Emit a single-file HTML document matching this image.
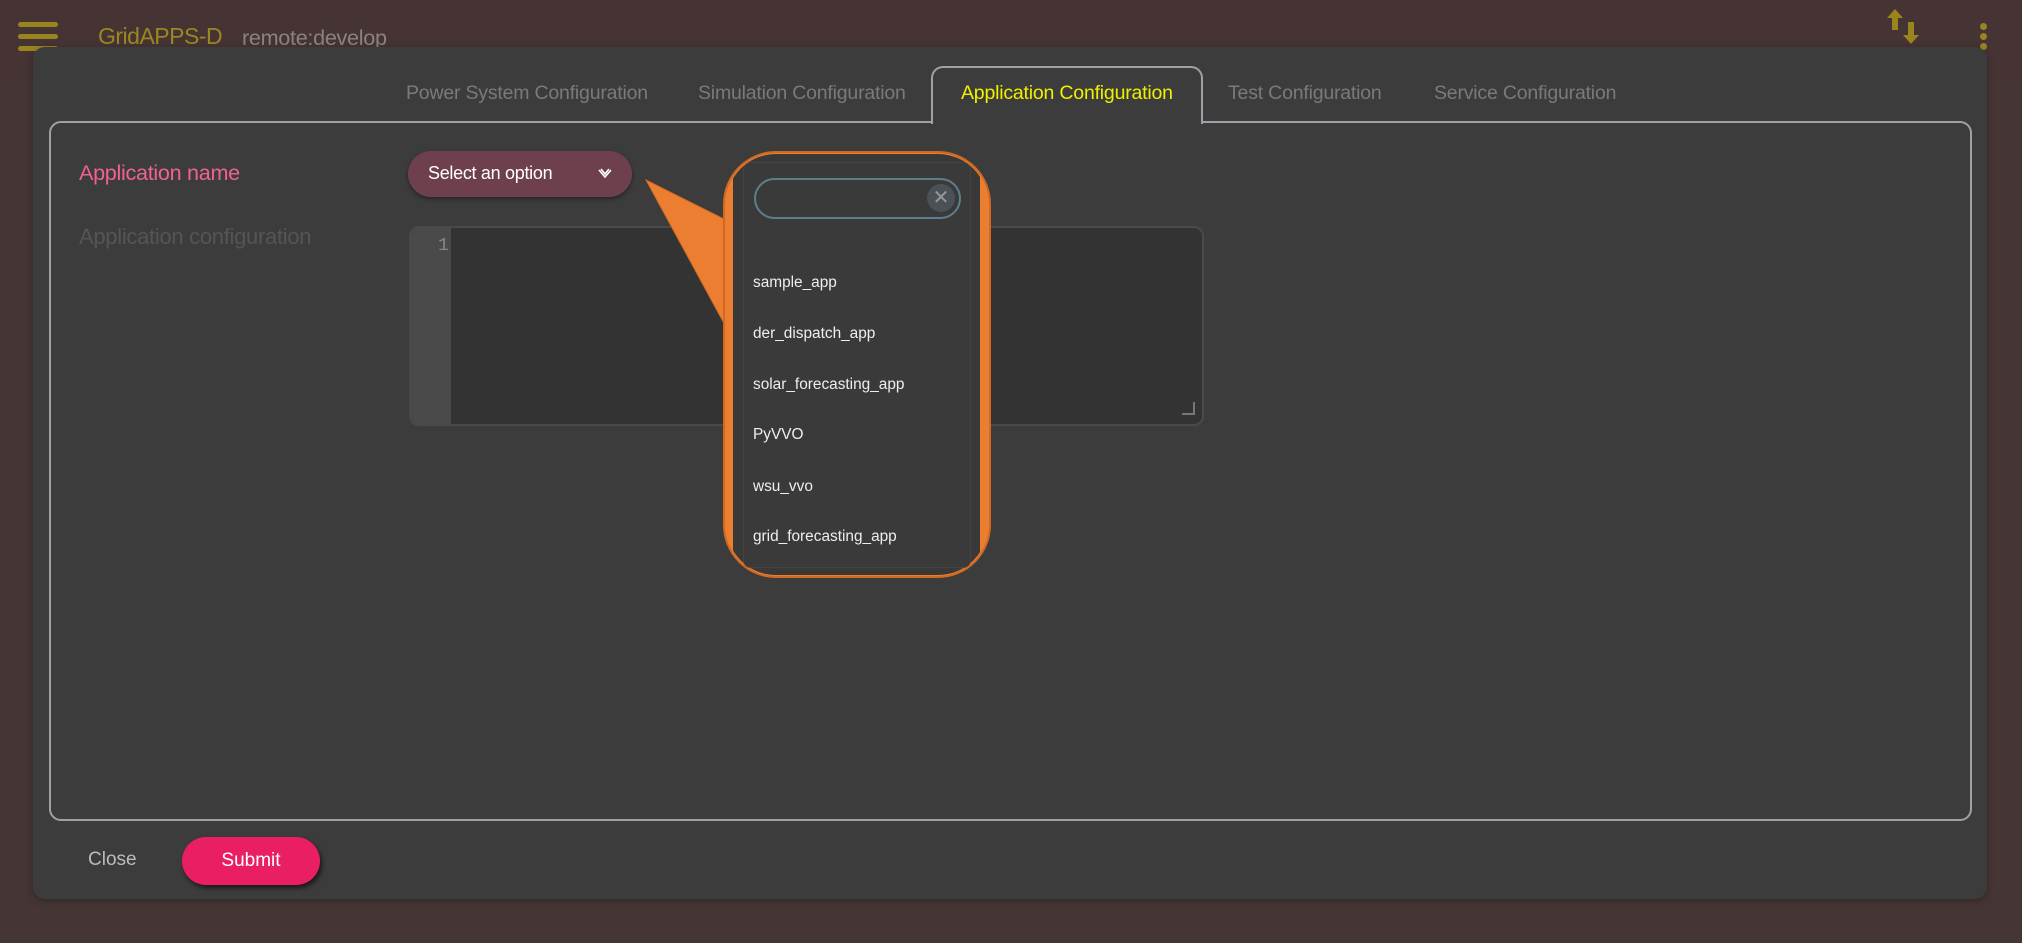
<!DOCTYPE html>
<html><head><meta charset="utf-8">
<style>
*{margin:0;padding:0;box-sizing:border-box}
body{width:2022px;height:943px;background:#453635;font-family:"Liberation Sans",sans-serif;position:relative;overflow:hidden}
.abs{position:absolute}
.ham{left:18px;width:40px;height:5px;background:#9a8420;border-radius:3px}
.tab{position:absolute;top:82px;font-size:19.5px;color:#7a7a7a;letter-spacing:-0.2px;white-space:nowrap}
.item{position:absolute;left:753px;font-size:15.4px;color:#eee;white-space:nowrap;line-height:20px}
</style></head><body>
<div class="abs" style="left:0;top:0;width:2022px;height:80px;background:#463434"></div>
<div class="abs ham" style="top:22px"></div>
<div class="abs ham" style="top:34px"></div>
<div class="abs ham" style="top:46px"></div>
<div class="abs" style="left:98px;top:23px;font-size:23px;color:#9a8722;letter-spacing:-0.5px">GridAPPS-D</div>
<div class="abs" style="left:242px;top:25px;font-size:21.6px;color:#8a8282;letter-spacing:-0.3px">remote:develop</div>
<svg class="abs" style="left:1885px;top:8px" width="36" height="40" viewBox="0 0 36 40">
<path d="M10 1 L18 10 H13 V22 H7 V10 H2 Z" fill="#9a8420"/>
<path d="M23 14 H29 V27 H34 L26 36 L18 27 H23 Z" fill="#9a8420"/>
</svg>
<div class="abs" style="left:1980px;top:23px;width:7px;height:7px;border-radius:50%;background:#9a8420"></div>
<div class="abs" style="left:1980px;top:33px;width:7px;height:7px;border-radius:50%;background:#9a8420"></div>
<div class="abs" style="left:1980px;top:43px;width:7px;height:7px;border-radius:50%;background:#9a8420"></div>

<div class="abs" style="left:33px;top:47px;width:1954px;height:852px;background:#3c3c3c;border-radius:12px;box-shadow:0 2px 8px rgba(0,0,0,.3)"></div>
<div class="abs" style="left:49px;top:121px;width:1923px;height:700px;border:2px solid #a0a0a8;border-radius:12px"></div>
<div class="abs" style="left:931px;top:66px;width:272px;height:58px;border:2px solid #a0a0a8;border-bottom:none;border-radius:12px 12px 0 0;background:#3c3c3c"></div>
<div class="tab" style="left:406px">Power System Configuration</div>
<div class="tab" style="left:698px">Simulation Configuration</div>
<div class="tab" style="left:961px;color:#f0f000">Application Configuration</div>
<div class="tab" style="left:1228px">Test Configuration</div>
<div class="tab" style="left:1434px">Service Configuration</div>

<div class="abs" style="left:79px;top:160px;font-size:21.6px;color:#f06292;letter-spacing:-0.3px">Application name</div>
<div class="abs" style="left:408px;top:151px;width:224px;height:46px;background:#6e404e;border-radius:23px;box-shadow:0 2px 4px rgba(0,0,0,.4)"></div>
<div class="abs" style="left:428px;top:163px;font-size:18px;color:#fff;letter-spacing:-0.3px">Select an option</div>
<svg class="abs" style="left:598px;top:168px" width="14" height="12" viewBox="0 0 14 12"><path d="M1 2 L7 9 L13 2 M3 1 L7 6 L11 1" stroke="#fff" stroke-width="1.6" fill="none"/></svg>
<div class="abs" style="left:79px;top:224px;font-size:22px;color:#555;letter-spacing:-0.3px">Application configuration</div>
<div class="abs" style="left:409px;top:226px;width:795px;height:200px;border:2px solid #4a4a4a;border-radius:10px;background:#333;overflow:hidden">
<div style="position:absolute;left:0;top:0;width:40px;height:100%;background:#4a4a4a"></div>
<div style="position:absolute;left:27px;top:8px;font-family:'Liberation Mono',monospace;font-size:18px;color:#888">1</div>
</div>
<svg class="abs" style="left:1180px;top:400px" width="16" height="16"><path d="M2 14 H14 V2" stroke="#777" stroke-width="2" fill="none"/></svg>

<svg class="abs" style="left:640px;top:150px" width="360" height="432">
<defs><clipPath id="c"><rect x="86" y="4" width="262" height="421" rx="50"/></clipPath></defs>
<path d="M6 30 L86 70 L86 177 Z" fill="#ec7e31" stroke="#d06a20" stroke-width="1"/>
<rect x="84" y="2" width="266" height="425" rx="52" fill="#ec7e31" stroke="#d06a20" stroke-width="2"/>
<rect x="93" y="4" width="247" height="421" fill="#393939" clip-path="url(#c)"/>
</svg>
<div class="abs" style="left:743px;top:162px;width:228px;height:406px;background:#3a3a3a;border:1px solid #444;border-radius:8px"></div>
<div class="abs" style="left:754px;top:178px;width:207px;height:41px;border:2px solid #5e7d8d;border-radius:21px"></div>
<div class="abs" style="left:927px;top:184px;width:28px;height:28px;border-radius:50%;background:#4a5257;color:#999;font-size:20px;text-align:center;line-height:28px">✕</div>
<div class="item" style="top:273px">sample_app</div>
<div class="item" style="top:324px">der_dispatch_app</div>
<div class="item" style="top:375px">solar_forecasting_app</div>
<div class="item" style="top:425px">PyVVO</div>
<div class="item" style="top:477px">wsu_vvo</div>
<div class="item" style="top:527px">grid_forecasting_app</div>

<div class="abs" style="left:88px;top:849px;font-size:19px;color:#bbb">Close</div>
<div class="abs" style="left:182px;top:837px;width:138px;height:48px;background:#e91e63;border-radius:24px;box-shadow:2px 3px 5px rgba(0,0,0,.6);color:#fff;font-size:19px;text-align:center;line-height:48px">Submit</div>
</body></html>
